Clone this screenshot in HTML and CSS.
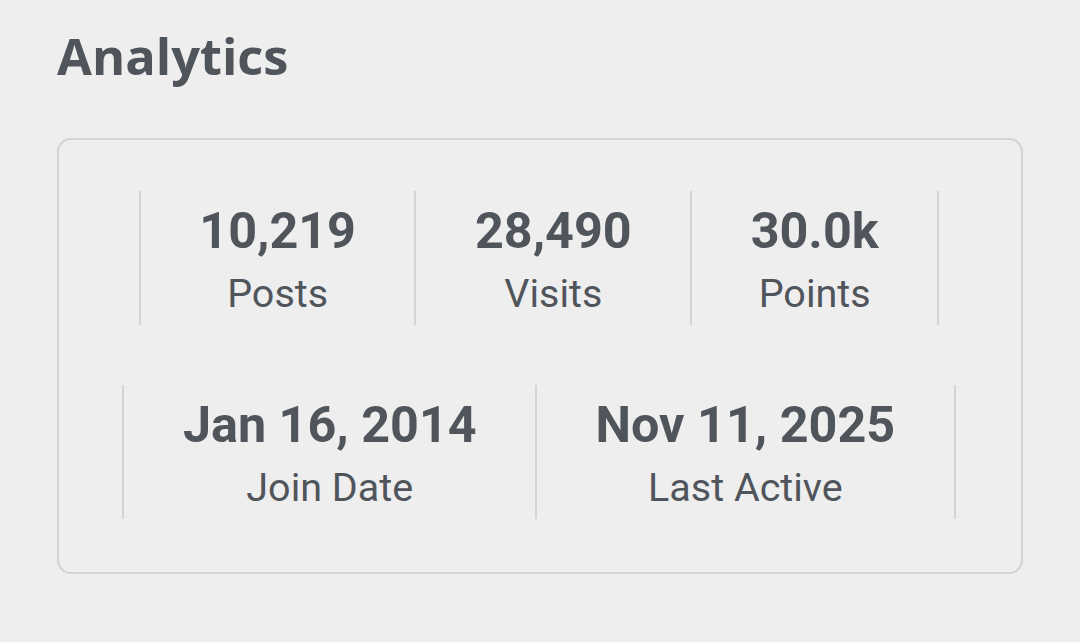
FILE: index.html
```html
<!DOCTYPE html>
<html lang="en">
<head>
<meta charset="utf-8">
<title>Analytics</title>
<link rel="stylesheet" href="styles.css">
</head>
<body>
<main class="page">
  <h1 class="title">Analytics</h1>
  <section class="card">
    <div class="stats">
      <div class="stat"><div class="value">10,219</div><div class="label">Posts</div></div>
      <div class="stat"><div class="value">28,490</div><div class="label">Visits</div></div>
      <div class="stat"><div class="value">30.0k</div><div class="label">Points</div></div>
      <div class="stat"><div class="value">Jan 16, 2014</div><div class="label">Join Date</div></div>
      <div class="stat"><div class="value">Nov 11, 2025</div><div class="label">Last Active</div></div>
    </div>
  </section>
</main>
</body>
</html>
```

FILE: styles.css
```css
html, body {
  margin: 0;
  padding: 0;
  background: #eeeeee;
}

.page {
  padding: 24px 57px 0;
  color: #50555c;
}

.title {
  margin: 0;
  font-family: "Open Sans", "Liberation Sans", sans-serif;
  font-weight: 700;
  font-size: 50.6px;
  line-height: 63px;
}

.card {
  margin-top: 51px;
  border: 2px solid #d4d4d4;
  border-radius: 14px;
  padding: 51px 0 53px;
  box-sizing: border-box;
  height: 436px;
}

.stats {
  display: flex;
  flex-wrap: wrap;
  justify-content: center;
  row-gap: 60px;
}

.stat {
  font-family: Roboto, "Liberation Sans", sans-serif;
  text-align: center;
  padding: 11px 58.5px 8.5px;
  border-left: 2px solid #d4d4d4;
  border-right: 2px solid #d4d4d4;
  margin-left: -2px;
}

.value {
  font-weight: 700;
  font-size: 50.3px;
  line-height: 58px;
}

.label {
  margin-top: 10.5px;
  font-weight: 400;
  font-size: 39.5px;
  line-height: 46px;
}
```
